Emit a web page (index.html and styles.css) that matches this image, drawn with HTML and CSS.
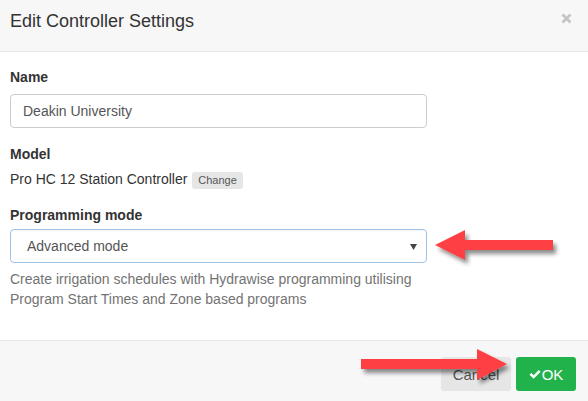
FILE: index.html
```html
<!DOCTYPE html>
<html>
<head>
<meta charset="utf-8">
<link rel="stylesheet" href="styles.css">
</head>
<body>
<div class="modal">
  <div class="modal-header">
    <h4 class="modal-title">Edit Controller Settings</h4>
    <button class="close" aria-label="Close">
      <svg width="11" height="11" viewBox="0 0 11 11"><path d="M1.5 1.5 L9.5 9.5 M9.5 1.5 L1.5 9.5" stroke="#c4c4c4" stroke-width="2.6" stroke-linecap="butt"/></svg>
    </button>
  </div>
  <div class="modal-body">
    <div class="form">
      <div class="group">
        <label class="label">Name</label>
        <div class="input">Deakin University</div>
      </div>
      <div class="group">
        <label class="label">Model</label>
        <div class="model">Pro HC 12 Station Controller <span class="badge">Change</span></div>
      </div>
      <div class="group">
        <label class="label label-pm">Programming mode</label>
        <div class="select">
          <span>Advanced mode</span>
          <svg class="caret" width="7" height="6" viewBox="0 0 7 6"><path d="M0 0 H7 L3.5 6 Z" fill="#444"/></svg>
        </div>
        <p class="help">Create irrigation schedules with Hydrawise programming utilising Program Start Times and Zone based programs</p>
      </div>
    </div>
  </div>
  <div class="modal-footer">
    <button class="btn btn-cancel">Cancel</button>
    <button class="btn btn-ok">
      <svg width="12" height="11" viewBox="0 0 12 11"><path d="M0.5 5.8 L2.3 4 L4.6 6.3 L9.8 1 L11.6 2.8 L4.6 9.8 Z" fill="#fff"/></svg>OK
    </button>
  </div>

  <svg class="arrow arrow-left" width="135" height="45" viewBox="0 0 135 45">
    <defs>
      <filter id="sh1" x="-20%" y="-30%" width="140%" height="170%">
        <feDropShadow dx="3" dy="4" stdDeviation="2" flood-color="#000" flood-opacity="0.45"/>
      </filter>
    </defs>
    <path d="M5 20 L35 5 L35 15 L123 15 L123 25 L35 25 L35 35 Z" fill="#fe4145" filter="url(#sh1)"/>
  </svg>

  <svg class="arrow arrow-right" width="160" height="50" viewBox="0 0 160 50">
    <defs>
      <filter id="sh2" x="-20%" y="-30%" width="140%" height="170%">
        <feDropShadow dx="3" dy="4" stdDeviation="2" flood-color="#000" flood-opacity="0.45"/>
      </filter>
    </defs>
    <path d="M6 14 L122 14 L122 4 L152 19 L122 35 L122 24 L6 24 Z" fill="#fe4145" filter="url(#sh2)"/>
  </svg>
</div>
</body>
</html>
```

FILE: styles.css
```css
* { box-sizing: border-box; }
html, body {
  margin: 0;
  padding: 0;
  background: #fff;
}
body {
  font-family: "Liberation Sans", Arial, sans-serif;
  font-size: 14px;
  color: #333;
}
.modal {
  position: relative;
  width: 588px;
  height: 401px;
  display: flex;
  flex-direction: column;
  overflow: hidden;
}
.modal-header {
  height: 52px;
  background: #f7f7f7;
  border-bottom: 1px solid #e5e5e5;
  display: flex;
  justify-content: space-between;
  align-items: flex-start;
  padding: 11px 16px 0 10px;
}
.modal-title {
  margin: 0;
  font-size: 18px;
  font-weight: normal;
  line-height: 20px;
  color: #333;
}
.close {
  border: 0;
  background: none;
  padding: 0;
  margin-top: 2px;
  width: 11px;
  height: 11px;
  display: flex;
}
.modal-body {
  flex: 1;
  padding: 15px 10px 0 10px;
}
.form {
  width: 417px;
}
.group {
  margin-bottom: 16px;
}
.label {
  display: block;
  font-weight: bold;
  line-height: 20px;
  margin-bottom: 7px;
}
.label-pm {
  margin-bottom: 4px;
}
.group:nth-child(2) .label {
  margin-bottom: 5px;
}
.input {
  height: 34px;
  border: 1px solid #ccc;
  border-radius: 4px;
  padding: 0 12px;
  line-height: 32px;
  color: #555;
}
.model {
  line-height: 20px;
  color: #333;
}
.badge {
  display: inline-block;
  background: #e6e6e6;
  color: #555;
  font-size: 11px;
  line-height: 17px;
  padding: 0 6px;
  border-radius: 3px;
  margin-left: 1px;
  vertical-align: 0px;
}
.select {
  height: 34px;
  border: 1px solid #9fc3e6;
  border-radius: 4px;
  padding: 0 9px 0 16px;
  display: flex;
  align-items: center;
  justify-content: space-between;
  color: #555;
  box-shadow: inset 0 1px 1px rgba(0,0,0,0.04);
}
.caret {
  margin-top: 1px;
}
.help {
  margin: 6px 0 0 0;
  color: #737373;
  line-height: 20px;
}
.modal-footer {
  height: 61px;
  background: #f7f7f7;
  border-top: 1px solid #e5e5e5;
  display: flex;
  justify-content: flex-end;
  align-items: flex-start;
  padding: 16px 12px 0 0;
  gap: 5px;
}
.btn {
  font-family: "Liberation Sans", Arial, sans-serif;
  font-size: 15px;
  height: 34px;
  border: 0;
  border-radius: 3px;
  padding: 0;
  display: flex;
  align-items: center;
  justify-content: center;
}
.btn-cancel {
  width: 70px;
  background: #e6e6e6;
  color: #555;
}
.btn-ok {
  width: 60px;
  background: #22b24c;
  color: #fff;
  gap: 1px;
}
.arrow {
  position: absolute;
  pointer-events: none;
}
.arrow-left {
  left: 430px;
  top: 225px;
}
.arrow-right {
  left: 355px;
  top: 345px;
}
```
